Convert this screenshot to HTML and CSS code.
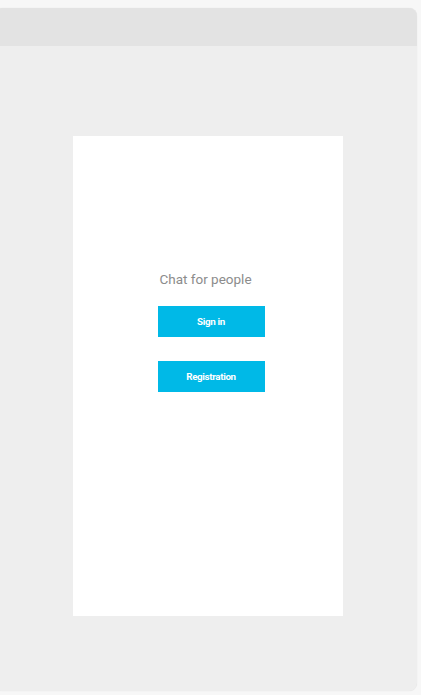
FILE: index.html
```html
<!DOCTYPE html>
<html>
<head>
<meta charset="utf-8">
<link rel="stylesheet" href="styles.css">
</head>
<body>
<div class="window">
  <div class="titlebar"></div>
  <div class="stage">
    <div class="phone">
      <div class="title">Chat for people</div>
      <button class="btn">Sign in</button>
      <button class="btn">Registration</button>
    </div>
  </div>
</div>
</body>
</html>
```
FILE: styles.css
```css
html, body {
  margin: 0;
  padding: 0;
  background: #f7f7f7;
  font-family: Roboto, "Noto Sans", sans-serif;
  overflow: hidden;
}
body {
  height: 695px;
}
.window {
  margin: 8px 0 0 -6px;
  width: 423px;
  height: 683px;
  border-radius: 8px;
  background: #eeeeee;
  box-shadow: 0 0 1px rgba(0,0,0,0.12);
  overflow: hidden;
  display: flex;
  flex-direction: column;
}
.titlebar {
  height: 38px;
  background: #e3e3e3;
  flex: none;
}
.stage {
  padding: 90px 0 0 79px;
}
.phone {
  width: 270px;
  height: 480px;
  background: #ffffff;
  display: flex;
  flex-direction: column;
  align-items: center;
  padding-top: 135px;
  box-sizing: border-box;
}
.title {
  font-size: 13.5px;
  color: #8c8c8c;
  line-height: 16px;
  margin-right: 5px;
  margin-bottom: 19px;
}
.btn {
  width: 107px;
  height: 31px;
  border: none;
  background: #00b9e7;
  color: #fff;
  font-family: Roboto, sans-serif;
  font-weight: 700;
  font-size: 9.8px;
  letter-spacing: -0.35px;
  margin: 0 0 24px 6px;
  padding: 0;
}
```
